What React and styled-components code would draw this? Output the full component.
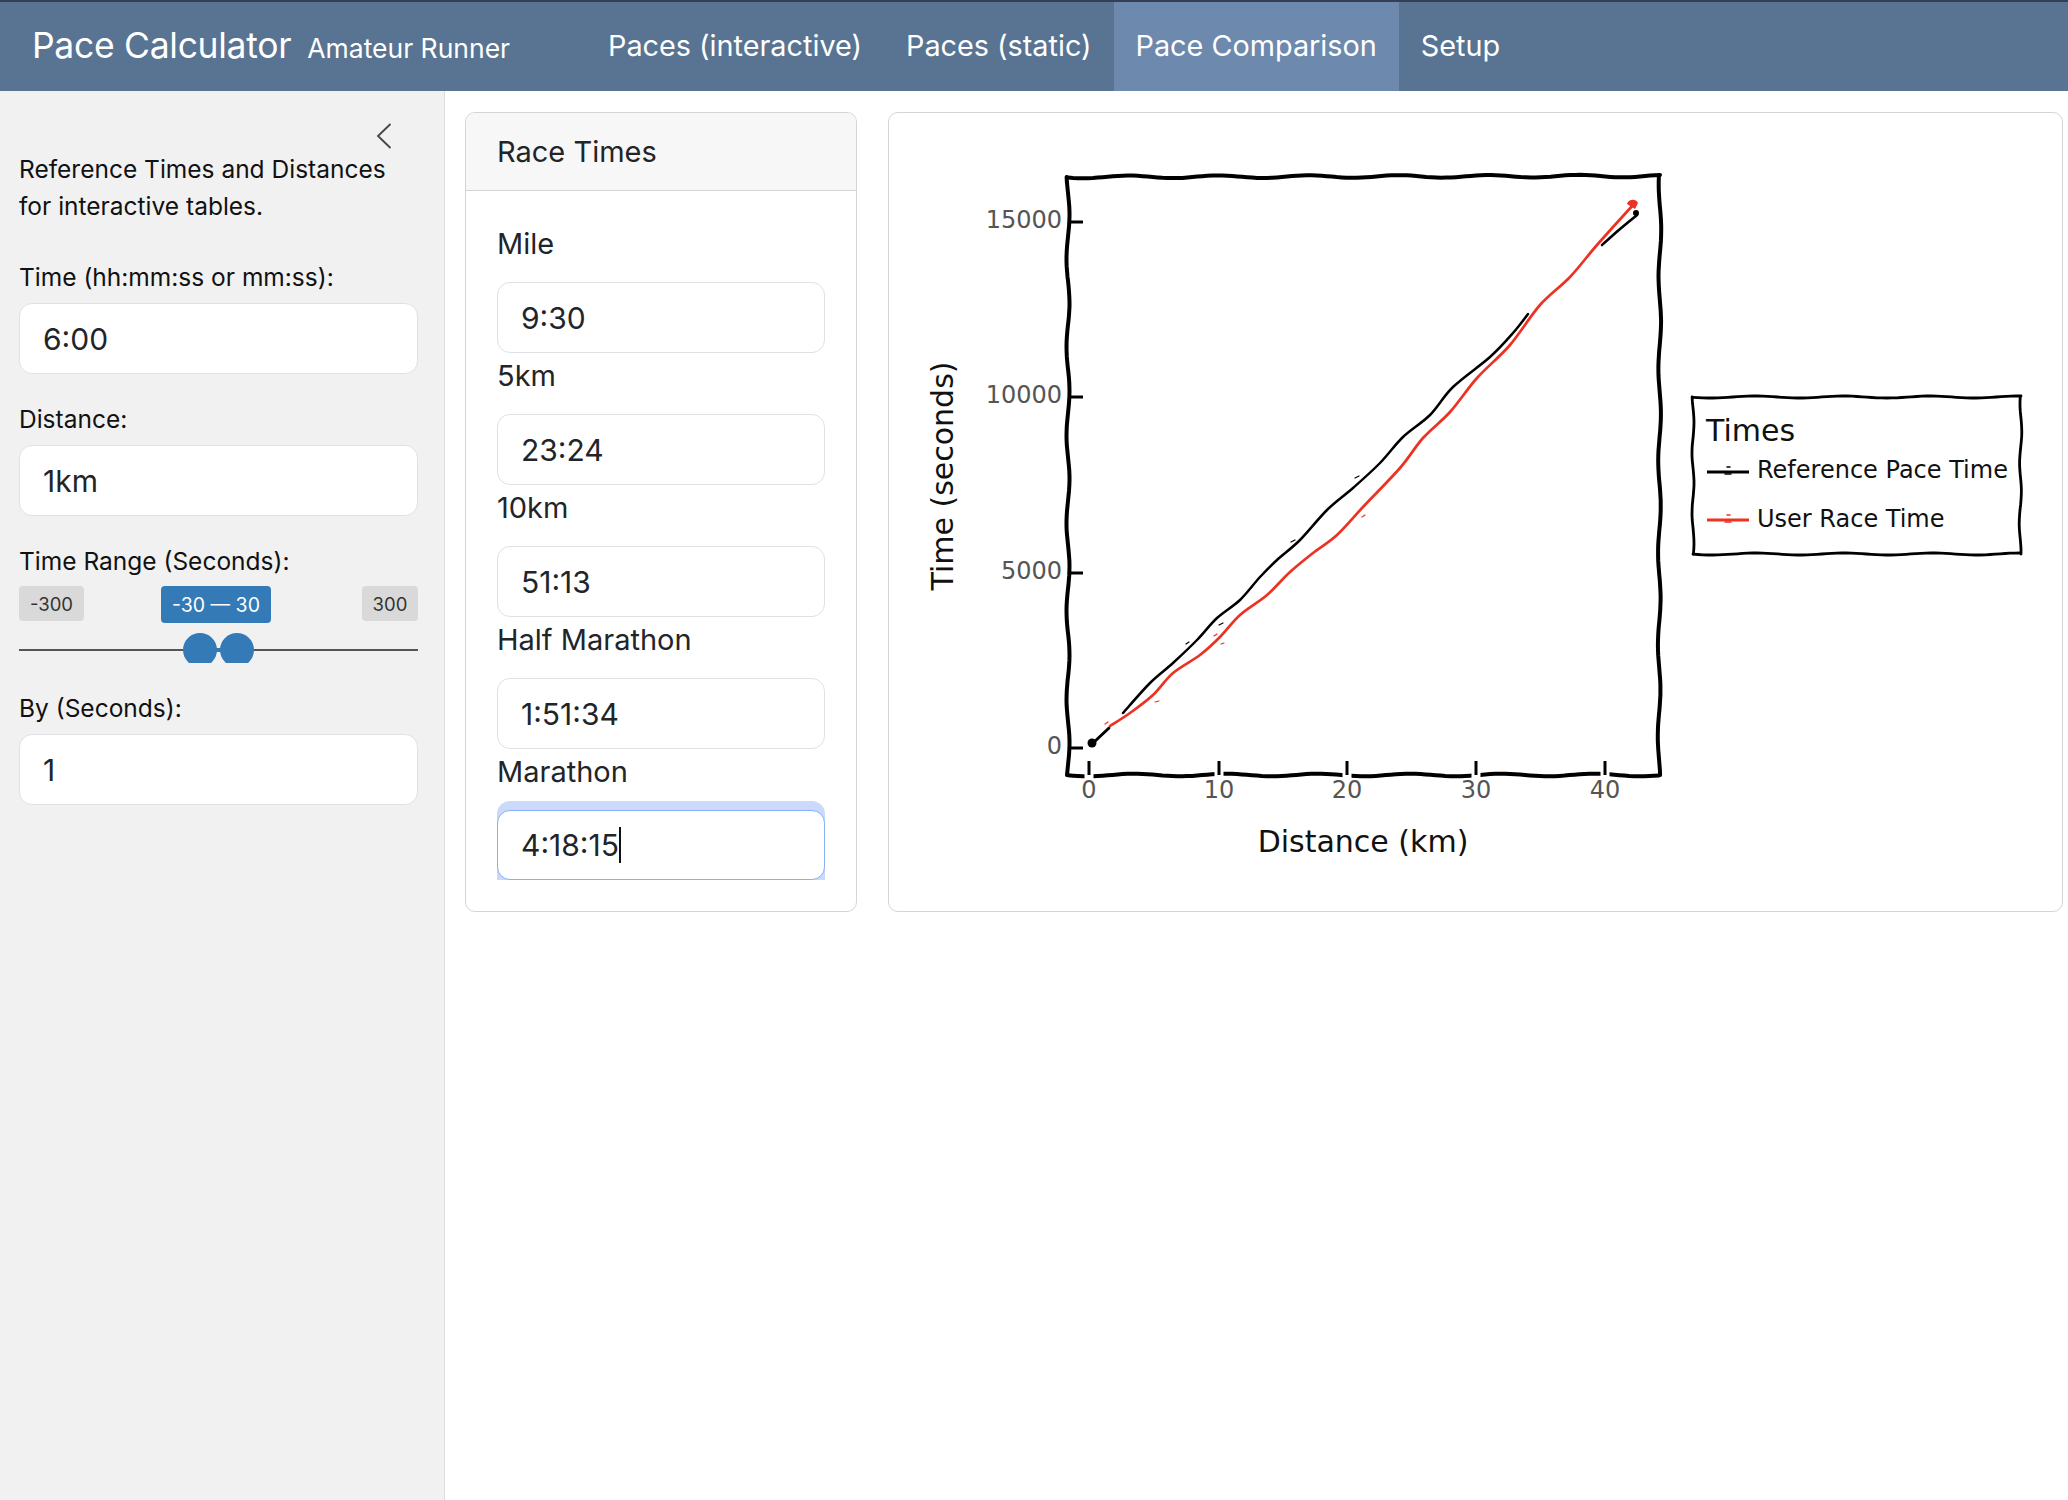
import React from "react";
import styled, { createGlobalStyle, css } from "styled-components";

const Global = createGlobalStyle`
  html, body { margin: 0; padding: 0; background: #fff; }
  body { font-family: Inter, "Liberation Sans", sans-serif; color: #212529; }
  * { box-sizing: border-box; }
`;

const Page = styled.div`
  width: 2068px;
  height: 1500px;
  display: flex;
  flex-direction: column;
  overflow: hidden;
`;

const NavBar = styled.nav`
  height: 91px;
  flex: none;
  display: flex;
  align-items: stretch;
  padding-left: 32px;
  background: #587492;
  border-top: 2px solid #343f55;
  color: #fff;
`;

const Brand = styled.div`
  display: flex;
  align-items: baseline;
  width: 554px;
  padding-top: 22px;
`;

const BrandTitle = styled.span`
  font-size: 35.5px;
  letter-spacing: -0.3px;
`;

const BrandSub = styled.span`
  font-size: 26.5px;
  margin-left: 16px;
`;

const Tab = styled.div`
  display: flex;
  align-items: center;
  padding: 0 22px 2px;
  font-size: 28.8px;
  background: ${(p) => (p.$active ? "#6d89ad" : "transparent")};
`;

const Body = styled.div`
  flex: 1;
  display: flex;
  min-height: 0;
`;

const Sidebar = styled.aside`
  width: 445px;
  flex: none;
  background: #f1f1f1;
  border-right: 1px solid #dcdcdc;
  padding: 32px 26px 0 19px;
  color: #111;
`;

const Collapse = styled.div`
  display: flex;
  justify-content: flex-end;
  margin-right: 26px;
  height: 28px;
  svg { display: block; }
`;

const Intro = styled.p`
  margin: 0 0 34px;
  font-size: 24.5px;
  line-height: 37px;
`;

const SideLabel = styled.div`
  font-size: 24.5px;
  line-height: 36px;
  margin-bottom: 8px;
`;

const fieldStyles = css`
  display: block;
  width: 100%;
  height: 71px;
  padding: 0 23px;
  border: 1px solid #dee2e6;
  border-radius: 13px;
  background: #fff;
  color: #212529;
  font-family: Inter, "Liberation Sans", sans-serif;
  font-size: 30px;
  outline: none;
`;

const Input = styled.input`
  ${fieldStyles}
`;

const SideGroup = styled.div`
  margin-bottom: 27px;
`;

const SliderBlock = styled.div`
  margin-bottom: 27px;
`;

const Badges = styled.div`
  display: flex;
  align-items: flex-start;
  margin-top: -1px;
`;

const Badge = styled.span`
  display: flex;
  align-items: center;
  justify-content: center;
  width: ${(p) => p.$w}px;
  height: ${(p) => (p.$value ? 37 : 35)}px;
  margin-left: ${(p) => p.$ml || "0"};
  border-radius: 4px;
  font-size: ${(p) => (p.$value ? 19.5 : 18.5)}px;
  background: ${(p) => (p.$value ? "#337ab7" : "#d9d9d9")};
  color: ${(p) => (p.$value ? "#fff" : "#333")};
`;

const Track = styled.div`
  position: relative;
  height: 30px;
  margin-top: 10px;
  overflow: hidden;
  &::before {
    content: "";
    position: absolute;
    left: 0;
    right: 0;
    top: 16px;
    height: 2px;
    background: #555;
  }
`;

const Thumb = styled.span`
  position: absolute;
  top: 0;
  left: ${(p) => p.$x}px;
  width: 34px;
  height: 34px;
  border-radius: 50%;
  background: #337ab7;
`;

const Connector = styled.span`
  position: absolute;
  left: 180px;
  width: 40px;
  top: 15px;
  height: 4px;
  background: #337ab7;
`;

const Main = styled.main`
  flex: 1;
  display: flex;
  align-items: flex-start;
  gap: 31px;
  padding: 21px 5px 0 20px;
`;

const Card = styled.section`
  height: 800px;
  border: 1px solid #d5d5d5;
  border-radius: 10px;
  background: #fff;
  overflow: hidden;
  flex: none;
`;

const RaceCard = styled(Card)`
  width: 392px;
`;

const PlotCard = styled(Card)`
  width: 1175px;
`;

const CardHeader = styled.header`
  height: 78px;
  display: flex;
  align-items: center;
  padding: 0 31px;
  background: #f7f7f7;
  border-bottom: 1px solid #d5d5d5;
  font-size: 29px;
`;

const CardBody = styled.div`
  padding: 30px 31px 0;
`;

const RaceLabel = styled.div`
  height: 46px;
  margin-bottom: 15px;
  padding-bottom: 2px;
  display: flex;
  align-items: center;
  font-size: 29px;
`;

const RaceGroup = styled.div``;

const FocusBand = styled.div`
  margin-top: -9px;
  padding-top: 9px;
  background: #cbdafb;
  border-radius: 13px 13px 0 0;
`;

const FocusedField = styled.div`
  ${fieldStyles}
  display: flex;
  align-items: center;
  height: 70px;
  border-color: #86b0f5;
`;

const Caret = styled.span`
  display: inline-block;
  width: 2px;
  height: 36px;
  background: #111;
`;

const PlotSvg = styled.svg`
  display: block;
`;

const AxisText = styled.text`
  font-family: "DejaVu Sans", sans-serif;
  font-size: 24px;
  fill: #555;
`;

const AxisTitle = styled.text`
  font-family: "DejaVu Sans", sans-serif;
  font-size: 30px;
  fill: #111;
`;

const LegendText = styled.text`
  font-family: "DejaVu Sans", sans-serif;
  font-size: ${(p) => p.$size || 24}px;
  fill: #111;
`;

const wavy = (x0, y0, x1, y1, amp, period, phase = 0) => {
  const len = Math.hypot(x1 - x0, y1 - y0);
  const nx = -(y1 - y0) / len;
  const ny = (x1 - x0) / len;
  const steps = Math.ceil(len / 5);
  let d = "";
  for (let i = 0; i <= steps; i++) {
    const t = i / steps;
    const w = amp * Math.sin((t * len * 2 * Math.PI) / period + phase);
    const x = x0 + (x1 - x0) * t + nx * w;
    const y = y0 + (y1 - y0) * t + ny * w;
    d += `${i ? "L" : "M"}${x.toFixed(1)} ${y.toFixed(1)} `;
  }
  return d;
};

const smooth = (p) => {
  let d = `M${p[0][0]} ${p[0][1]} `;
  for (let i = 0; i < p.length - 1; i++) {
    const a = p[Math.max(i - 1, 0)];
    const b = p[i];
    const c = p[i + 1];
    const e = p[Math.min(i + 2, p.length - 1)];
    d += `C${(b[0] + (c[0] - a[0]) / 6).toFixed(1)} ${(b[1] + (c[1] - a[1]) / 6).toFixed(1)} ${(c[0] - (e[0] - b[0]) / 6).toFixed(1)} ${(c[1] - (e[1] - b[1]) / 6).toFixed(1)} ${c[0]} ${c[1]} `;
  }
  return d;
};

const BLACK = "#000";
const RED = "#ec3323";

const blackA = [[1092, 744], [1109, 728]];
const blackB = [[1123, 713], [1150, 683], [1173, 663], [1197, 640], [1217, 618], [1240, 600], [1260, 577], [1277, 560], [1300, 540], [1327, 510], [1353, 488], [1380, 463], [1403, 437], [1430, 415], [1453, 387], [1490, 357], [1513, 333], [1528, 314]];
const blackC = [[1602, 245], [1620, 229], [1637, 215]];
const redLine = [[1110, 726], [1130, 713], [1153, 695], [1173, 673], [1200, 655], [1220, 637], [1240, 615], [1267, 595], [1290, 572], [1313, 553], [1337, 535], [1363, 507], [1400, 468], [1423, 438], [1450, 412], [1477, 378], [1510, 345], [1540, 305], [1570, 277], [1597, 245], [1633, 205]];

const xTicks = [[1089, "0"], [1219, "10"], [1347, "20"], [1476, "30"], [1605, "40"]];
const yTicks = [[748, "0"], [573, "5000"], [397, "10000"], [222, "15000"]];

const Plot = () => (
  <PlotSvg width="1173" height="798" viewBox="889 113 1173 798" role="img" aria-label="Race time against distance">
    <g fill="none" stroke={BLACK} strokeLinecap="round" strokeLinejoin="round">
      <path d={wavy(1068, 177, 1660, 176, 1.3, 90, 0.5)} strokeWidth="4" />
      <path d={wavy(1660, 176, 1659, 775, 1.3, 92, 1)} strokeWidth="4" />
      <path d={wavy(1068, 177, 1068, 775, 1.5, 88, 2)} strokeWidth="4" />
      <path d={wavy(1068, 775, 1659, 775, 1.3, 92, 0.2)} strokeWidth="4" />
      {xTicks.map(([x]) => (
        <g key={x}>
          <path d={`M${x} 770V779`} stroke="#fff" strokeWidth="9" strokeLinecap="butt" />
          <path d={`M${x} 761V775`} strokeWidth="3" strokeLinecap="butt" />
        </g>
      ))}
      {yTicks.map(([y]) => (
        <path key={y} d={`M1068 ${y}H1083`} strokeWidth="3" strokeLinecap="butt" />
      ))}
      <path d={smooth(blackA)} strokeWidth="3" />
      <path d={smooth(blackB)} strokeWidth="2.5" />
      <path d={smooth(blackC)} strokeWidth="2.6" />
      <path d={smooth(redLine)} stroke={RED} strokeWidth="2.7" />
      <path d="M1105 724l3 -2M1155 702l4 -1M1214 636l3 -2M1221 644l3 -1M1362 517l3 -2" stroke={RED} strokeWidth="1.2" />
      <path d="M1355 478l4 -2M1291 542l4 -2M1219 625l4 -2M1186 644l3 -2" stroke={BLACK} strokeWidth="1.2" />
    </g>
    <circle cx="1092" cy="743" r="4.5" fill={BLACK} />
    <circle cx="1636" cy="213" r="3" fill={BLACK} />
    <path d="M1627 204a6 6 0 0 1 11 -1l-3 6z" fill={RED} />
    {xTicks.map(([x, t]) => (
      <AxisText key={t} x={x} y="798" textAnchor="middle">{t}</AxisText>
    ))}
    {yTicks.map(([y, t]) => (
      <AxisText key={t} x="1062" y={y + 6} textAnchor="end">{t}</AxisText>
    ))}
    <AxisTitle x="1363" y="852" textAnchor="middle">Distance (km)</AxisTitle>
    <AxisTitle x="953" y="476" textAnchor="middle" transform="rotate(-90 953 476)">Time (seconds)</AxisTitle>
    <g fill="none" stroke={BLACK} strokeLinecap="round">
      <path d={wavy(1693, 397, 2021, 397, 1, 88, 0.3)} strokeWidth="2.8" />
      <path d={wavy(2021, 397, 2020, 554, 1, 60, 1)} strokeWidth="2.8" />
      <path d={wavy(1693, 397, 1693, 554, 1, 60, 2)} strokeWidth="2.8" />
      <path d={wavy(1693, 554, 2020, 554, 1, 88, 0.2)} strokeWidth="2.8" />
      <path d="M1707 472H1749" strokeWidth="3" strokeLinecap="butt" />
      <path d="M1727 467h3M1725 474h6" strokeWidth="1.5" />
      <path d="M1707 520H1749" stroke={RED} strokeWidth="3" strokeLinecap="butt" />
      <path d="M1727 515h3M1725 522h6" stroke={RED} strokeWidth="1.5" />
    </g>
    <LegendText x="1706" y="441" $size="30">Times</LegendText>
    <LegendText x="1757" y="478">Reference Pace Time</LegendText>
    <LegendText x="1757" y="527">User Race Time</LegendText>
  </PlotSvg>
);

const races = [
  ["Mile", "9:30"],
  ["5km", "23:24"],
  ["10km", "51:13"],
  ["Half Marathon", "1:51:34"],
];

export default function App() {
  return (
    <Page>
      <Global />
      <NavBar>
        <Brand>
          <BrandTitle>Pace Calculator</BrandTitle>
          <BrandSub>Amateur Runner</BrandSub>
        </Brand>
        <Tab>Paces (interactive)</Tab>
        <Tab>Paces (static)</Tab>
        <Tab $active>Pace Comparison</Tab>
        <Tab>Setup</Tab>
      </NavBar>
      <Body>
        <Sidebar>
          <Collapse>
            <svg width="16" height="26" viewBox="0 0 16 26" fill="none" stroke="#444" strokeWidth="1.8">
              <path d="M14.5 1 2 13l12.5 12" />
            </svg>
          </Collapse>
          <Intro>Reference Times and Distances<br />for interactive tables.</Intro>
          <SideGroup>
            <SideLabel>Time (hh:mm:ss or mm:ss):</SideLabel>
            <Input readOnly value="6:00" />
          </SideGroup>
          <SideGroup>
            <SideLabel>Distance:</SideLabel>
            <Input readOnly value="1km" />
          </SideGroup>
          <SliderBlock>
            <SideLabel>Time Range (Seconds):</SideLabel>
            <Badges>
              <Badge $w={65}>-300</Badge>
              <Badge $w={110} $value $ml="77px">-30 — 30</Badge>
              <Badge $w={56} $ml="auto">300</Badge>
            </Badges>
            <Track>
              <Connector />
              <Thumb $x={164} />
              <Thumb $x={201} />
            </Track>
          </SliderBlock>
          <SideGroup>
            <SideLabel>By (Seconds):</SideLabel>
            <Input readOnly value="1" />
          </SideGroup>
        </Sidebar>
        <Main>
          <RaceCard>
            <CardHeader>Race Times</CardHeader>
            <CardBody>
              {races.map(([label, value]) => (
                <RaceGroup key={label}>
                  <RaceLabel>{label}</RaceLabel>
                  <Input readOnly value={value} />
                </RaceGroup>
              ))}
              <RaceGroup>
                <RaceLabel>Marathon</RaceLabel>
                <FocusBand>
                  <FocusedField>
                    4:18:15<Caret />
                  </FocusedField>
                </FocusBand>
              </RaceGroup>
            </CardBody>
          </RaceCard>
          <PlotCard>
            <Plot />
          </PlotCard>
        </Main>
      </Body>
    </Page>
  );
}
